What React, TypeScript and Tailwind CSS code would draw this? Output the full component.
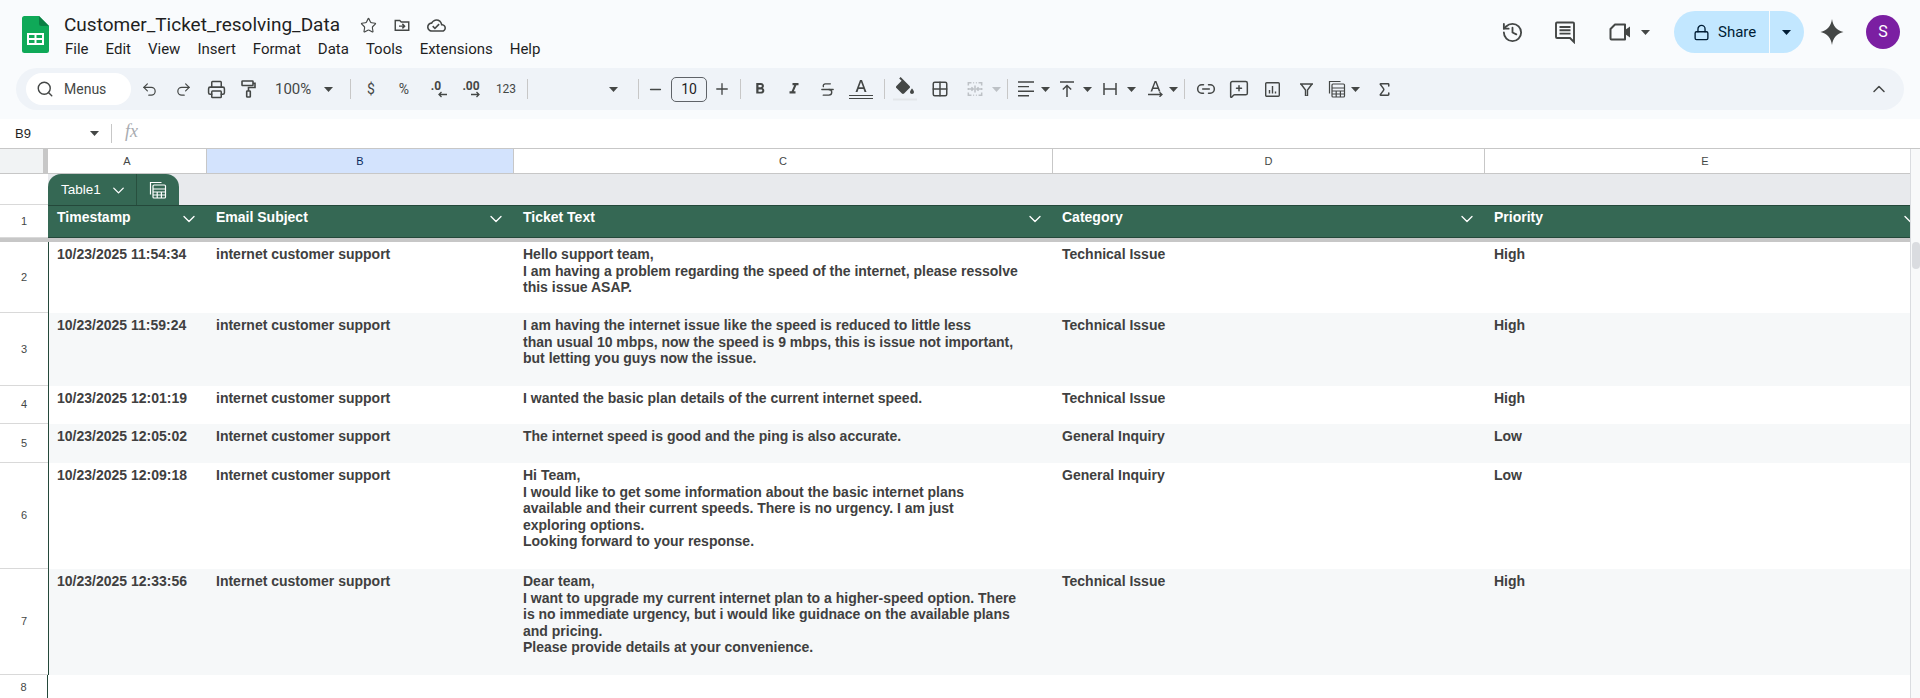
import React from 'react';
import { Search, Undo2, Redo2, Printer, Minus, Plus, Strikethrough, Grid2x2, Link2, MessageSquarePlus, Sigma, ChevronUp, ChevronDown, History, Lock, Star } from 'lucide-react';

const Caret = ({ className = 'text-[#444746]' }: { className?: string }) => (
  <svg width="9" height="5" viewBox="0 0 9 5" className={className}>
    <path d="M0 0h9L4.5 5z" fill="currentColor" />
  </svg>
);

const Cell: React.FC<{ className: string; children?: React.ReactNode }> = ({ className, children }) => (
  <div className={`flex h-full shrink-0 items-center justify-center ${className}`}>{children}</div>
);

const Sep = ({ className }: { className: string }) => <div className={`h-[20px] w-px shrink-0 bg-[#c7c7c7] ${className}`} />;

const Mat: React.FC<{ d: string; size?: number; className?: string }> = ({ d, size = 18, className = 'text-[#444746]' }) => (
  <svg width={size} height={size} viewBox="0 0 24 24" className={className}>
    <path d={d} fill="currentColor" />
  </svg>
);

const TableIcon = ({ className = 'text-[#444746]', size = 18 }: { className?: string; size?: number }) => (
  <svg width={size} height={size} viewBox="0 0 18 18" fill="none" stroke="currentColor" strokeWidth="1.2" className={className}>
    <path d="M1.5 13.5V1.5h11" />
    <rect x="4" y="4" width="12.5" height="13" rx="1" />
    <path d="M4 8h12.5M4 11h12.5M4 14h12.5M8.2 11v6M12.4 11v6" />
  </svg>
);

const SheetsLogo = () => (
  <svg width="27" height="37" viewBox="0 0 27 37">
    <path d="M17 0H2.5A2.5 2.5 0 0 0 0 2.5v32A2.5 2.5 0 0 0 2.5 37h22a2.5 2.5 0 0 0 2.5-2.5V10z" fill="#0fa958" />
    <path d="M17 0l10 10h-7.5A2.5 2.5 0 0 1 17 7.5z" fill="#0a7f43" />
    <path d="M6 18h15v10H6z" fill="none" stroke="#fff" strokeWidth="2" />
    <path d="M6 23h15M13.5 18v10" stroke="#fff" strokeWidth="2" />
  </svg>
);

const menus = ['File', 'Edit', 'View', 'Insert', 'Format', 'Data', 'Tools', 'Extensions', 'Help'];

const TitleBar = () => (
  <div className="flex h-[68px] shrink-0 justify-between">
    <div className="flex">
      <div className="ml-[22px] mt-[16px]">
        <SheetsLogo />
      </div>
      <div className="ml-[15px] flex flex-col pt-[12px]">
        <div className="flex h-[26px] items-center">
          <span className="text-[19px] leading-[26px] text-[#1f1f1f]">Customer_Ticket_resolving_Data</span>
          <div className="ml-[20px] flex items-center gap-[16px] text-[#444746]">
            <Star size={17} strokeWidth={1.6} />
            <svg width="18" height="18" viewBox="0 0 24 24" fill="none" stroke="currentColor" strokeWidth="1.9">
              <path d="M3 6h6l2 2h10v11H3z" />
              <path d="M8 13.5h7M12.5 10.5l3 3-3 3" />
            </svg>
            <Mat d="M19.35 10.04C18.67 6.59 15.64 4 12 4 9.11 4 6.6 5.64 5.35 8.04 2.34 8.36 0 10.91 0 14c0 3.31 2.69 6 6 6h13c2.76 0 5-2.24 5-5 0-2.64-2.05-4.78-4.65-4.96zM19 18H6c-2.21 0-4-1.79-4-4 0-2.05 1.53-3.76 3.56-3.97l1.07-.11.5-.95C8.08 7.14 9.94 6 12 6c2.62 0 4.88 1.86 5.39 4.43l.3 1.5 1.53.11c1.56.1 2.78 1.41 2.78 2.96 0 1.65-1.35 3-3 3zm-9-3.82l-2.09-2.09L6.5 13.5 10 17l6.01-6.01-1.41-1.41z" size={19} />
          </div>
        </div>
        <div className="mt-[1px] flex gap-[17px] pl-[1px] text-[15px] leading-[20px] text-[#1f1f1f]">
          {menus.map((m) => (
            <span key={m}>{m}</span>
          ))}
        </div>
      </div>
    </div>
    <div className="flex items-start pr-[20px] pt-[11px]">
      <div className="flex h-[42px] items-center text-[#444746]">
        <History size={23} strokeWidth={1.9} />
        <div className="ml-[29px]">
          <svg width="24" height="24" viewBox="0 0 24 24" fill="none" stroke="currentColor" strokeWidth="1.9">
            <path d="M21 22l-4-4H4a1 1 0 0 1-1-1V3.5a1 1 0 0 1 1-1h16a1 1 0 0 1 1 1z" />
            <path d="M6.5 7h11M6.5 10.3h11M6.5 13.6h11" />
          </svg>
        </div>
        <div className="ml-[30px]">
          <svg width="25" height="24" viewBox="0 0 25 24">
            <path d="M8 4.5h10v15H4.5a1 1 0 0 1-1-1V9z" fill="none" stroke="currentColor" strokeWidth="2" strokeLinejoin="round" />
            <path d="M18 10l5-3.5v11L18 14z" fill="currentColor" />
          </svg>
        </div>
        <div className="ml-[9px]">
          <Caret />
        </div>
      </div>
      <div className="ml-[24px] flex h-[42px] w-[130px] overflow-hidden rounded-full bg-[#c2e7ff] text-[#001d35]">
        <div className="flex w-[95px] items-center pl-[19px]">
          <Lock size={17} strokeWidth={1.9} />
          <span className="ml-[8px] text-[15px]">Share</span>
        </div>
        <div className="w-px bg-[#f9fbfd]" />
        <div className="flex flex-1 items-center justify-center pr-[1px]">
          <Caret className="text-[#001d35]" />
        </div>
      </div>
      <div className="ml-[16px] flex h-[42px] items-center text-[#444746]">
        <svg width="24" height="26" viewBox="0 0 24 26">
          <path d="M12 0c1 7 4.500 11.300 11.500 13C16.500 14.700 13 19 12 26 11 19 7.500 14.700.5 13 7.500 11.300 11 7 12 0z" fill="currentColor" />
        </svg>
      </div>
      <div className="ml-[22px] mt-[4px] flex h-[34px] w-[34px] items-center justify-center rounded-full bg-[#7b1fa2] text-[16px] text-white">S</div>
    </div>
  </div>
);

const Toolbar = () => (
  <div className="mx-[16px] flex h-[42px] items-center rounded-full bg-[#eff3f8] pl-[10px] text-[#444746]">
    <div className="flex h-[32px] w-[105px] shrink-0 items-center rounded-full bg-white pl-[10px]">
      <Search size={18} strokeWidth={1.9} />
      <span className="ml-[10px] text-[14px] text-[#444746]">Menus</span>
    </div>
    <Cell className="ml-[1px] w-[34px]"><Undo2 size={17} strokeWidth={1.7} /></Cell>
    <Cell className="w-[34px]"><Redo2 size={17} strokeWidth={1.7} /></Cell>
    <Cell className="w-[32px]"><Printer size={19} strokeWidth={1.9} /></Cell>
    <Cell className="w-[32px]">
      <svg width="15" height="18" viewBox="0 0 15 18" fill="none" stroke="currentColor" strokeWidth="1.600">
        <rect x="1" y="1" width="11" height="4.500" rx=".6" />
        <path d="M12 3.200h2v4.300H7.500V11" />
        <rect x="5.700" y="11" width="3.600" height="6" rx=".6" />
      </svg>
    </Cell>
    <Cell className="w-[80px] !justify-start pl-[11px]">
      <span className="text-[15px]">100%</span>
      <span className="ml-[13px]"><Caret /></span>
    </Cell>
    <Sep className="ml-[6px]" />
    <Cell className="ml-[6px] w-[28px] text-[14px]">$</Cell>
    <Cell className="w-[38px] text-[14px]">%</Cell>
    <Cell className="w-[26px]">
      <div className="flex flex-col items-end">
        <span className="text-[12px] font-bold leading-[12px]">.0</span>
        <svg width="9" height="7" viewBox="0 0 9 7" fill="none" stroke="currentColor" strokeWidth="1.300" className="mr-[-6px] mt-[-1px]">
          <path d="M9 3.500H1M3.500 1L1 3.500 3.500 6" />
        </svg>
      </div>
    </Cell>
    <Cell className="w-[44px]">
      <div className="flex flex-col items-end">
        <span className="text-[12px] font-bold leading-[12px]">.00</span>
        <svg width="9" height="7" viewBox="0 0 9 7" fill="none" stroke="currentColor" strokeWidth="1.300" className="mt-[-1px]">
          <path d="M0 3.500h8M5.500 1L8 3.500 5.500 6" />
        </svg>
      </div>
    </Cell>
    <Cell className="w-[26px] text-[12px]">123</Cell>
    <Sep className="ml-[8px]" />
    <Cell className="w-[90px] !justify-end">
      <Caret />
    </Cell>
    <Sep className="ml-[20px]" />
    <Cell className="w-[32px]"><Minus size={17} strokeWidth={1.8} /></Cell>
    <div className="flex h-[25px] w-[36px] shrink-0 items-center justify-center rounded-[5px] border border-[#5f6368] text-[14px] text-[#1f1f1f]">10</div>
    <Cell className="w-[30px]"><Plus size={18} strokeWidth={1.8} /></Cell>
    <Sep className="ml-[3px]" />
    <Cell className="w-[38px]"><Mat d="M15.600 10.790c.97-.67 1.650-1.770 1.650-2.790 0-2.260-1.750-4-4-4H7v14h7.040c2.090 0 3.710-1.700 3.710-3.790 0-1.520-.86-2.820-2.150-3.420zM10 6.500h3c.83 0 1.500.67 1.500 1.500s-.67 1.500-1.500 1.500h-3v-3zm3.500 9H10v-3h3.500c.83 0 1.500.67 1.500 1.500s-.67 1.500-1.500 1.500z" /></Cell>
    <Cell className="w-[29px]"><Mat d="M10 4v3h2.210l-3.420 8H6v3h8v-3h-2.210l3.420-8H18V4z" /></Cell>
    <Cell className="w-[38px]"><Strikethrough size={17} strokeWidth={1.9} /></Cell>
    <Cell className="w-[30px]">
      <svg width="24" height="24" viewBox="0 0 24 24">
        <path d="M11 3L6.500 15h2l1-3h5l1 3h2L13 3h-2zm-1 7.300L12 5l2 5.300h-4z" fill="currentColor" />
        <path d="M0 18.500h24M0 21.500h24" stroke="currentColor" strokeWidth="1" />
      </svg>
    </Cell>
    <Sep className="ml-[8px]" />
    <Cell className="ml-[4px] w-[32px]">
      <svg width="24" height="26" viewBox="0 0 24 26">
        <path d="M16.560 9.940L7.620 1 6.210 2.410l2.380 2.380-5.150 5.150c-.59.59-.59 1.540 0 2.120l5.500 5.500c.29.29.68.44 1.060.44s.77-.15 1.060-.44l5.500-5.500c.59-.58.59-1.530 0-2.120zM19 12.500s-2 2.170-2 3.500c0 1.100.9 2 2 2s2-.9 2-2c0-1.330-2-3.500-2-3.500z" fill="currentColor" />
        <path d="M0 23.500h24" stroke="#e3e6ea" strokeWidth="2" />
      </svg>
    </Cell>
    <Cell className="w-[38px]"><Grid2x2 size={18} strokeWidth={2} /></Cell>
    <Cell className="w-[32px]">
      <svg width="16" height="16" viewBox="0 0 18 18" fill="none" stroke="#bdc1c6" strokeWidth="1.700">
        <path d="M5 2H1.500v3M13 2h3.500v3M5 16H1.500v-3M13 16h3.500v-3M7 2h1M10 2h1M7 16h1M10 16h1M1.500 8v2M16.500 8v2M9 5v8M1.500 9H7M5 7l2 2-2 2M16.500 9H11M13 7l-2 2 2 2" />
      </svg>
    </Cell>
    <Cell className="w-[10px]"><Caret className="text-[#bdc1c6]" /></Cell>
    <Sep className="ml-[6px]" />
    <Cell className="ml-[6px] w-[24px]">
      <svg width="16" height="16" viewBox="0 0 16 16" stroke="currentColor" strokeWidth="1.400">
        <path d="M0 1h16M0 5.600h11M0 10.200h16M0 14.800h11" />
      </svg>
    </Cell>
    <Cell className="w-[15px]"><Caret /></Cell>
    <Cell className="w-[28px]">
      <svg width="14" height="16" viewBox="0 0 14 16" fill="none" stroke="currentColor" strokeWidth="1.500">
        <path d="M0 1h14M7 16V4.500M2.800 8.500L7 4.500l4.200 4" />
      </svg>
    </Cell>
    <Cell className="w-[13px]"><Caret /></Cell>
    <Cell className="w-[32px]">
      <svg width="14" height="12" viewBox="0 0 14 12" fill="none" stroke="currentColor" strokeWidth="1.500">
        <path d="M1 0v12M13 0v12M1 6h12" />
      </svg>
    </Cell>
    <Cell className="w-[11px]"><Caret /></Cell>
    <Cell className="ml-[6px] w-[24px]">
      <svg width="15" height="16" viewBox="0 0 15 16">
        <path d="M6.600 0L2.500 10.500h1.700l.9-2.600h4.800l.9 2.600h1.700L8.400 0H6.600zM5.600 6.500l1.900-5 1.900 5H5.600z" fill="currentColor" />
        <path d="M0 13.500h14M11.500 11.200L14 13.500l-2.500 2.300" fill="none" stroke="currentColor" strokeWidth="1.300" />
      </svg>
    </Cell>
    <Cell className="w-[12px]"><Caret /></Cell>
    <Sep className="ml-[5px]" />
    <Cell className="ml-[3px] w-[36px]"><Link2 size={20} strokeWidth={1.8} /></Cell>
    <Cell className="w-[30px]"><MessageSquarePlus size={20} strokeWidth={1.8} /></Cell>
    <Cell className="w-[37px]">
      <svg width="15" height="15" viewBox="0 0 15 15" fill="none" stroke="currentColor" strokeWidth="1.400">
        <rect x=".7" y=".7" width="13.600" height="13.600" rx="1" />
        <path d="M4.500 11.500V8M7.500 11.500V4M10.500 11.500V9.500" />
      </svg>
    </Cell>
    <Cell className="w-[30px]">
      <svg width="13" height="13" viewBox="0 0 13 13" fill="none" stroke="currentColor" strokeWidth="1.400">
        <path d="M0 1h13M1 1l4.500 6v6h2V7L12 1" />
      </svg>
    </Cell>
    <Cell className="w-[25px] !justify-end"><TableIcon size={18} /></Cell>
    <Cell className="ml-[3px] w-[12px]"><Caret /></Cell>
    <Cell className="ml-[10px] w-[26px]"><Sigma size={17} strokeWidth={2.2} /></Cell>
    <div className="flex-1" />
    <Cell className="mr-[13px] w-[24px]"><ChevronUp size={20} strokeWidth={1.8} /></Cell>
  </div>
);

const FormulaBar = () => (
  <div className="flex h-[30px] shrink-0 items-center border-b border-[#c7c7c7] bg-white font-['Liberation_Sans',sans-serif] text-[13px] text-[#1f1f1f]">
    <span className="w-[90px] pl-[15px]">B9</span>
    <Caret />
    <div className="ml-[12px] h-[19px] w-px bg-[#c7c7c7]" />
    <span className="ml-[13px] mt-[-4px] font-['Liberation_Serif',serif] text-[18px] italic text-[#a8abb0]">fx</span>
  </div>
);

const colGrid = 'grid grid-cols-[48px_159px_307px_539px_432px_425px]';

const rows = [
  { h: 'h-[71px]', n: 2, alt: false, ts: '10/23/2025 11:54:34', subj: 'internet customer support', text: 'Hello support team,\nI am having a problem regarding the speed of the internet, please ressolve\nthis issue ASAP.', cat: 'Technical Issue', pri: 'High' },
  { h: 'h-[73px]', n: 3, alt: true, ts: '10/23/2025 11:59:24', subj: 'internet customer support', text: 'I am having the internet issue like the speed is reduced to little less\nthan usual 10 mbps, now the speed is 9 mbps, this is issue not important,\nbut letting you guys now the issue.', cat: 'Technical Issue', pri: 'High' },
  { h: 'h-[38px]', n: 4, alt: false, ts: '10/23/2025 12:01:19', subj: 'internet customer support', text: 'I wanted the basic plan details of the current internet speed.', cat: 'Technical Issue', pri: 'High' },
  { h: 'h-[39px]', n: 5, alt: true, ts: '10/23/2025 12:05:02', subj: 'Internet customer support', text: 'The internet speed is good and the ping is also accurate.', cat: 'General Inquiry', pri: 'Low' },
  { h: 'h-[106px]', n: 6, alt: false, ts: '10/23/2025 12:09:18', subj: 'Internet customer support', text: 'Hi Team,\nI would like to get some information about the basic internet plans\navailable and their current speeds. There is no urgency. I am just\nexploring options.\nLooking forward to your response.', cat: 'General Inquiry', pri: 'Low' },
  { h: 'h-[106px]', n: 7, alt: true, ts: '10/23/2025 12:33:56', subj: 'Internet customer support', text: 'Dear team,\nI want to upgrade my current internet plan to a higher-speed option. There\nis no immediate urgency, but i would like guidnace on the available plans\nand pricing.\nPlease provide details at your convenience.', cat: 'Technical Issue', pri: 'High' },
];

const RowNum: React.FC<{ children?: React.ReactNode }> = ({ children }) => (
  <div className="flex items-center justify-center border-b border-[#d9d9d9] bg-white text-[11px] text-[#444746]">{children}</div>
);

const dataCell = 'whitespace-pre-line pt-[4px] text-[14px] font-bold leading-[16.6px] text-[#404040]';

const Sheet = () => (
  <div className="flex min-h-0 flex-1 overflow-hidden font-['Liberation_Sans',sans-serif]">
    <div className="w-[1910px] shrink-0">
      <div className={`${colGrid} h-[25px] border-b border-[#c7c7c7] text-[11px] text-[#444746]`}>
        <div className="border-r-[5px] border-[#c7c7c7] bg-[#f1f3f4]" />
        <div className="flex items-center justify-center border-r border-[#c7c7c7]">A</div>
        <div className="flex items-center justify-center border-r border-[#c7c7c7] bg-[#d3e3fd] text-[#0b2a5c]">B</div>
        <div className="flex items-center justify-center border-r border-[#c7c7c7]">C</div>
        <div className="flex items-center justify-center border-r border-[#c7c7c7]">D</div>
        <div className="flex items-center justify-center pl-[15px]">E</div>
      </div>
      <div className="flex h-[31px]">
        <div className="w-[48px] shrink-0 border-b border-[#d9d9d9] bg-white" />
        <div className="flex flex-1 items-end bg-[#e8eaed]">
          <div className="flex h-[31px] w-[131px] rounded-t-[13px] bg-[#356854] text-white">
            <div className="flex w-[89px] items-center border-r border-[#28503f] pl-[13px] pt-[1px]">
              <span className="text-[13.5px] font-medium">Table1</span>
              <ChevronDown size={19} strokeWidth={1.7} className="ml-[8px]" />
            </div>
            <div className="flex flex-1 items-center justify-center">
              <TableIcon size={18} className="text-white" />
            </div>
          </div>
        </div>
      </div>
      <div className={`${colGrid} h-[33px]`}>
        <RowNum>1</RowNum>
        {['Timestamp', 'Email Subject', 'Ticket Text', 'Category', 'Priority'].map((t, i) => (
          <div key={t} className="flex items-start justify-between overflow-hidden border-y border-[#24483a] bg-[#356854] pl-[9px] pr-[8px] pt-[3px] text-[14px] font-bold leading-[17px] text-white">
            <span>{t}</span>
            <ChevronDown size={20} strokeWidth={1.6} className={i === 4 ? 'mr-[-18px] shrink-0' : 'shrink-0'} />
          </div>
        ))}
      </div>
      <div className="h-[4px] bg-[#c7c7c7]" />
      {rows.map((r) => {
        const bg = r.alt ? 'bg-[#f6f8f9]' : 'bg-white';
        return (
          <div key={r.n} className={`${colGrid} ${r.h}`}>
            <RowNum>{r.n}</RowNum>
            <div className={`${dataCell} ${bg} border-l border-[#24483a] pl-[8px] text-[13.8px]`}>{r.ts}</div>
            <div className={`${dataCell} ${bg} pl-[9px]`}>{r.subj}</div>
            <div className={`${dataCell} ${bg} pl-[9px]`}>{r.text}</div>
            <div className={`${dataCell} ${bg} pl-[9px]`}>{r.cat}</div>
            <div className={`${dataCell} ${bg} pl-[9px]`}>{r.pri}</div>
          </div>
        );
      })}
      <div className={`${colGrid} h-[24px]`}>
        <div className="flex items-center justify-center border-r border-[#24483a] text-[11px] text-[#444746]">8</div>
      </div>
    </div>
    <div className="flex flex-1 flex-col border-l border-[#dadce0] bg-[#f8f9fa]">
      <div className="h-[93px] shrink-0" />
      <div className="ml-[1px] h-[27px] w-[8px] rounded-[4px] bg-[#dadce0]" />
    </div>
  </div>
);

export default function App() {
  return (
    <div className="flex h-[698px] w-[1920px] flex-col overflow-hidden bg-white font-['Roboto',sans-serif]">
      <div className="h-[119px] shrink-0 bg-[#f9fbfd]">
        <TitleBar />
        <Toolbar />
      </div>
      <FormulaBar />
      <Sheet />
    </div>
  );
}
